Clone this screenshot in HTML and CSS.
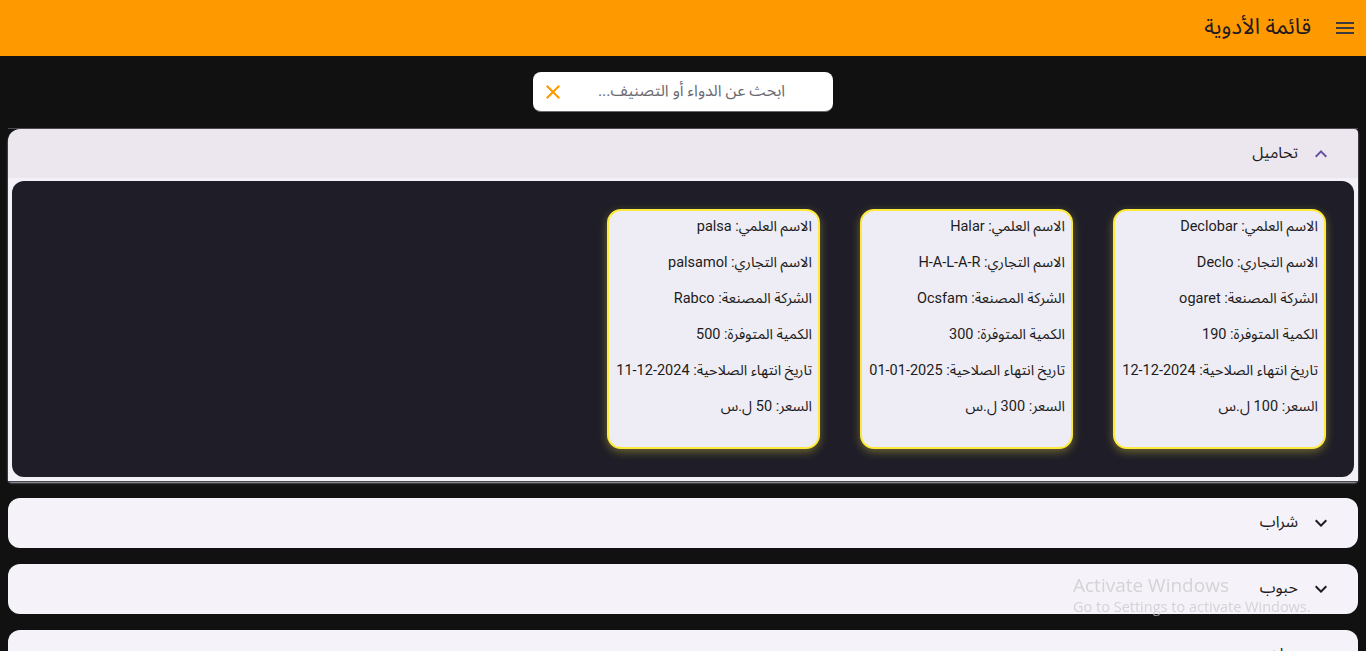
FILE: index.html
```html
<!DOCTYPE html>
<html lang="ar" dir="rtl">
<head>
<meta charset="utf-8">
<title>قائمة الأدوية</title>
<link rel="stylesheet" href="styles.css">
</head>
<body>
<header class="appbar">
  <button class="menu-btn" aria-label="menu">
    <svg width="24" height="24" viewBox="0 0 24 24"><path d="M3 18h18v-2H3v2zm0-5h18v-2H3v2zm0-7v2h18V6H3z" fill="#3b3a3f"/></svg>
  </button>
  <h1 class="title">قائمة الأدوية</h1>
</header>
<main class="content">
  <div class="search-row">
    <div class="search">
      <span class="search-text">ابحث عن الدواء أو التصنيف...</span>
      <svg class="clear" width="24" height="24" viewBox="0 0 24 24"><path d="M19 6.41 17.59 5 12 10.59 6.41 5 5 6.41 10.59 12 5 17.59 6.41 19 12 13.41 17.59 19 19 17.59 13.41 12z" fill="#ff9800"/></svg>
    </div>
  </div>
  <div class="divider"></div>
  <section class="panel open">
    <div class="panel-head">
      <svg class="chev" width="24" height="24" viewBox="0 0 24 24"><path d="M7.41 15.41 12 10.83l4.59 4.58L18 14l-6-6-6 6z" fill="#6750a4"/></svg>
      <span class="panel-title">تحاميل</span>
    </div>
    <div class="panel-body">
      <div class="cards">
        <div class="card">
          <p>الاسم العلمي: Declobar</p>
          <p>الاسم التجاري: Declo</p>
          <p>الشركة المصنعة: ogaret</p>
          <p>الكمية المتوفرة: 190</p>
          <p>تاريخ انتهاء الصلاحية: 2024-12-12</p>
          <p>السعر: 100 ل.س</p>
        </div>
        <div class="card">
          <p>الاسم العلمي: Halar</p>
          <p>الاسم التجاري: H-A-L-A-R</p>
          <p>الشركة المصنعة: Ocsfam</p>
          <p>الكمية المتوفرة: 300</p>
          <p>تاريخ انتهاء الصلاحية: 2025-01-01</p>
          <p>السعر: 300 ل.س</p>
        </div>
        <div class="card">
          <p>الاسم العلمي: palsa</p>
          <p>الاسم التجاري: palsamol</p>
          <p>الشركة المصنعة: Rabco</p>
          <p>الكمية المتوفرة: 500</p>
          <p>تاريخ انتهاء الصلاحية: 2024-12-11</p>
          <p>السعر: 50 ل.س</p>
        </div>
      </div>
    </div>
  </section>
  <div class="divider"></div>
  <section class="panel closed">
    <div class="panel-head">
      <svg class="chev" width="24" height="24" viewBox="0 0 24 24"><path d="M7.41 8.59 12 13.17l4.59-4.58L18 10l-6 6-6-6z" fill="#1d1b20"/></svg>
      <span class="panel-title">شراب</span>
    </div>
  </section>
  <section class="panel closed">
    <div class="panel-head">
      <svg class="chev" width="24" height="24" viewBox="0 0 24 24"><path d="M7.41 8.59 12 13.17l4.59-4.58L18 10l-6 6-6-6z" fill="#1d1b20"/></svg>
      <span class="panel-title">حبوب</span>
    </div>
  </section>
  <section class="panel closed last">
    <div class="panel-head">
      <svg class="chev" width="24" height="24" viewBox="0 0 24 24"><path d="M7.41 8.59 12 13.17l4.59-4.58L18 10l-6 6-6-6z" fill="#1d1b20"/></svg>
      <span class="panel-title">مراهم</span>
    </div>
  </section>
</main>
<div class="watermark" dir="ltr">
  <div class="wm-title">Activate Windows</div>
  <div class="wm-sub">Go to Settings to activate Windows.</div>
</div>
</body>
</html>
```
FILE: styles.css
```css
html, body {
  margin: 0;
  padding: 0;
  height: 100%;
  overflow: hidden;
}
body {
  background: #111111;
  font-family: Roboto, "Noto Sans Arabic", "DejaVu Sans", "Noto Sans", sans-serif;
  color: #1d1b20;
}
.appbar {
  height: 56px;
  background: #ff9900;
  display: flex;
  align-items: center;
  padding: 0 9px 0 0;
  box-sizing: border-box;
}
.menu-btn {
  width: 24px;
  height: 24px;
  padding: 0;
  border: 0;
  background: none;
  display: flex;
}
.title {
  margin: 0 22px 0 0;
  font-size: 22px;
  font-weight: 400;
  color: #1d1b20;
  position: relative;
  top: -1px;
}
.content {
  padding: 0 8px;
}
.search-row {
  display: flex;
  justify-content: center;
  padding-top: 16px;
}
.search {
  width: 300px;
  height: 40px;
  background: #ffffff;
  border-radius: 8px;
  border-bottom: 1px solid #6b6870;
  box-sizing: border-box;
  display: flex;
  align-items: center;
  justify-content: space-between;
  padding: 0 48px 0 8px;
}
.search-text {
  font-size: 16px;
  color: #6b6a70;
  position: relative;
  top: -1px;
}
.divider {
  height: 1px;
  background: #4a4850;
}
.search-row + .divider {
  margin-top: 16px;
}
.panel {
  background: #ece7ef;
  border-radius: 4px 12px 12px 4px;
}
.panel.open {
  border-radius: 12px 4px 4px 4px;
  box-shadow: 0 2px 2px rgba(200, 196, 206, 0.9);
  margin-bottom: 0;
}
.panel-head {
  height: 49px;
  display: flex;
  align-items: center;
  padding-right: 25px;
  box-sizing: border-box;
}
.panel-title {
  font-size: 16px;
  margin-right: 11px;
  position: relative;
  top: -1px;
}
.panel-body {
  background: #f4f0f7;
  padding: 3px 4px 4px;
}
.cards {
  background: #1f1e28;
  border-radius: 12px;
  padding: 28px 28px 28px;
  display: flex;
  gap: 40px;
}
.card {
  width: 213px;
  height: 240px;
  box-sizing: border-box;
  background: #eeedf5;
  border: 2px solid #fde93c;
  border-radius: 14px;
  box-shadow: 0 3px 8px rgba(253, 233, 60, 0.35);
  padding: 6px 6px 0 6px;
}
.card p {
  margin: 0;
  height: 36px;
  line-height: 20px;
  font-size: 14.5px;
  color: #1d1b20;
  white-space: nowrap;
}
.divider + .panel.closed {
  margin-top: 16px;
}
.panel.closed {
  background: #f6f2f9;
  border-radius: 12px;
  margin-bottom: 16px;
}
.panel.closed .panel-head {
  height: 50px;
}
.watermark {
  position: fixed;
  left: 1073px;
  top: 572px;
  color: rgba(200, 200, 200, 0.75);
  font-family: "Open Sans", "DejaVu Sans", sans-serif;
  pointer-events: none;
}
.wm-title {
  font-size: 19px;
  line-height: 26px;
}
.wm-sub {
  font-size: 14.5px;
  line-height: 18px;
}
```
